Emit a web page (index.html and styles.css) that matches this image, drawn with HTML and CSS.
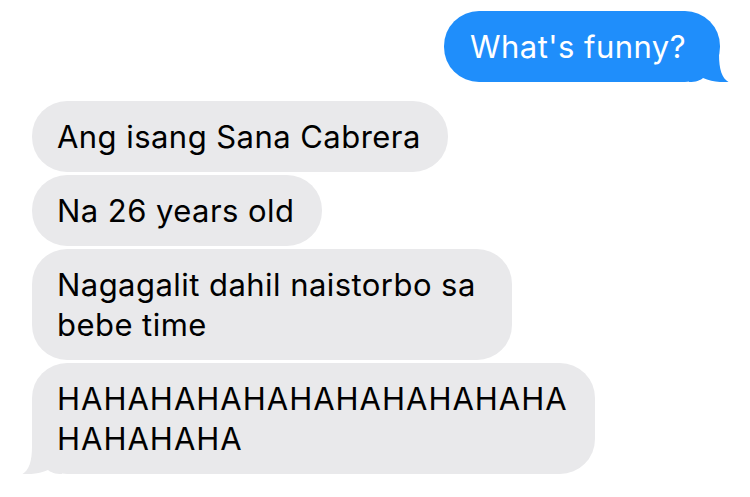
FILE: index.html
```html
<!DOCTYPE html>
<html lang="tl">
<head>
<meta charset="utf-8">
<title>Messages</title>
<link rel="stylesheet" href="styles.css">
</head>
<body>
<main class="thread">
  <div class="row-out">
    <div class="bubble bubble-out"><svg class="tail tail-out" viewBox="0 0 40 40" width="40" height="40" aria-hidden="true"><path d="M0,0 H30 V12 C30,28 33,36 39.5,40 C32,40.6 22,39.6 14,36 C11,38.5 7,40 0,40 Z"/></svg><span class="msg">What's funny?</span></div>
  </div>
  <div class="group-in">
    <div class="bubble bubble-in"><span class="msg">Ang isang Sana Cabrera</span></div>
    <div class="bubble bubble-in"><span class="msg">Na 26 years old</span></div>
    <div class="bubble bubble-in bubble-roomy"><span class="msg">Nagagalit dahil naistorbo sa<br>bebe time</span></div>
    <div class="bubble bubble-in"><svg class="tail tail-in" viewBox="0 0 40 40" width="40" height="40" aria-hidden="true"><path d="M0,0 H30 V12 C30,28 33,36 39.5,40 C32,40.6 22,39.6 14,36 C11,38.5 7,40 0,40 Z"/></svg><span class="msg msg-caps">HAHAHAHAHAHAHAHAHAHAHA<br>HAHAHAHA</span></div>
  </div>
</main>
</body>
</html>
```

FILE: styles.css
```css
html, body {
  margin: 0;
  padding: 0;
  background: #ffffff;
}

body {
  width: 750px;
  height: 497px;
  overflow: hidden;
  font-family: Inter, "Noto Sans", "DejaVu Sans", sans-serif;
}

.thread {
  display: flex;
  flex-direction: column;
  padding: 11px 30px 0 32px;
}

.row-out {
  display: flex;
  justify-content: flex-end;
  margin-bottom: 19px;
}

.group-in {
  display: flex;
  flex-direction: column;
  align-items: flex-start;
  gap: 3px;
}

.bubble {
  position: relative;
  padding: 15.5px 27px 15.5px 25px;
  border-radius: 35px;
}

.msg {
  position: relative;
  display: block;
  font-size: 31px;
  line-height: 40px;
  letter-spacing: 0.45px;
  white-space: nowrap;
}

.msg-caps {
  letter-spacing: 1px;
}

.bubble-out {
  background: #1f8efb;
  color: #ffffff;
  padding-left: 26px;
  padding-right: 34px;
}

.bubble-in {
  background: #e9e9eb;
  color: #000000;
}

.bubble-roomy {
  padding-right: 36px;
}

.tail {
  position: absolute;
  bottom: 0;
  display: block;
}

.tail-out {
  right: -9px;
  fill: #1f8efb;
}

.tail-in {
  left: -10px;
  fill: #e9e9eb;
  transform: scaleX(-1);
}
```
